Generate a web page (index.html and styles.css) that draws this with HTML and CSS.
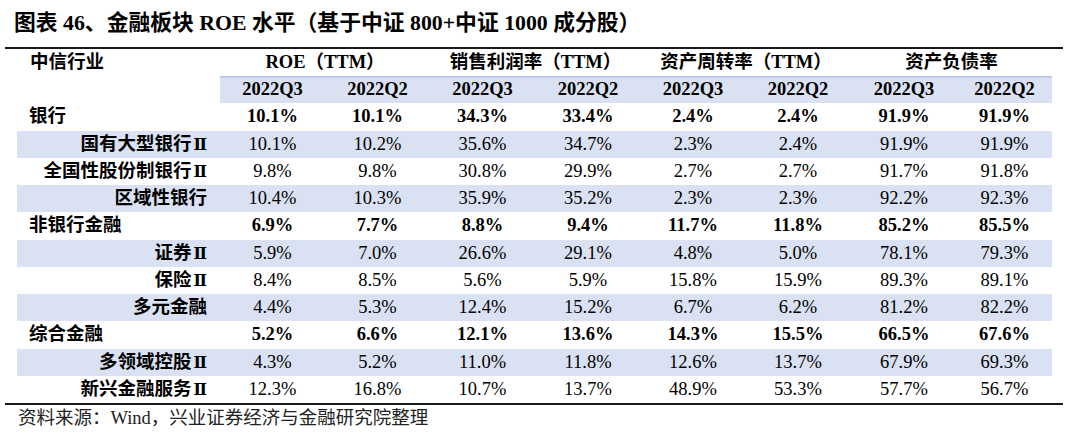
FILE: index.html
```html
<!DOCTYPE html>
<html lang="zh-CN">
<head>
<meta charset="utf-8">
<title>金融板块 ROE 水平</title>
<link rel="stylesheet" href="styles.css">
</head>
<body>
<div class="page">
  <h1 class="title">图表 46、金融板块 ROE 水平（基于中证 800+中证 1000 成分股）</h1>
  <div class="table">
    <div class="row head1">
      <div class="cell label">中信行业</div>
      <div class="cell group span2">ROE（TTM）</div>
      <div class="cell group span2">销售利润率（TTM）</div>
      <div class="cell group span2">资产周转率（TTM）</div>
      <div class="cell group span2">资产负债率</div>
    </div>
    <div class="row head2">
      <div class="cell label"></div>
      <div class="cell q">2022Q3</div>
      <div class="cell q">2022Q2</div>
      <div class="cell q">2022Q3</div>
      <div class="cell q">2022Q2</div>
      <div class="cell q">2022Q3</div>
      <div class="cell q">2022Q2</div>
      <div class="cell q">2022Q3</div>
      <div class="cell q">2022Q2</div>
    </div>

    <div class="row top">
      <div class="cell label">银行</div>
      <div class="cell">10.1%</div><div class="cell">10.1%</div>
      <div class="cell">34.3%</div><div class="cell">33.4%</div>
      <div class="cell">2.4%</div><div class="cell">2.4%</div>
      <div class="cell">91.9%</div><div class="cell">91.9%</div>
    </div>
    <div class="row sub band">
      <div class="cell label">国有大型银行<span class="rn">Ⅱ</span></div>
      <div class="cell">10.1%</div><div class="cell">10.2%</div>
      <div class="cell">35.6%</div><div class="cell">34.7%</div>
      <div class="cell">2.3%</div><div class="cell">2.4%</div>
      <div class="cell">91.9%</div><div class="cell">91.9%</div>
    </div>
    <div class="row sub">
      <div class="cell label">全国性股份制银行<span class="rn">Ⅱ</span></div>
      <div class="cell">9.8%</div><div class="cell">9.8%</div>
      <div class="cell">30.8%</div><div class="cell">29.9%</div>
      <div class="cell">2.7%</div><div class="cell">2.7%</div>
      <div class="cell">91.7%</div><div class="cell">91.8%</div>
    </div>
    <div class="row sub band">
      <div class="cell label">区域性银行</div>
      <div class="cell">10.4%</div><div class="cell">10.3%</div>
      <div class="cell">35.9%</div><div class="cell">35.2%</div>
      <div class="cell">2.3%</div><div class="cell">2.3%</div>
      <div class="cell">92.2%</div><div class="cell">92.3%</div>
    </div>

    <div class="row top">
      <div class="cell label">非银行金融</div>
      <div class="cell">6.9%</div><div class="cell">7.7%</div>
      <div class="cell">8.8%</div><div class="cell">9.4%</div>
      <div class="cell">11.7%</div><div class="cell">11.8%</div>
      <div class="cell">85.2%</div><div class="cell">85.5%</div>
    </div>
    <div class="row sub band">
      <div class="cell label">证券<span class="rn">Ⅱ</span></div>
      <div class="cell">5.9%</div><div class="cell">7.0%</div>
      <div class="cell">26.6%</div><div class="cell">29.1%</div>
      <div class="cell">4.8%</div><div class="cell">5.0%</div>
      <div class="cell">78.1%</div><div class="cell">79.3%</div>
    </div>
    <div class="row sub">
      <div class="cell label">保险<span class="rn">Ⅱ</span></div>
      <div class="cell">8.4%</div><div class="cell">8.5%</div>
      <div class="cell">5.6%</div><div class="cell">5.9%</div>
      <div class="cell">15.8%</div><div class="cell">15.9%</div>
      <div class="cell">89.3%</div><div class="cell">89.1%</div>
    </div>
    <div class="row sub band">
      <div class="cell label">多元金融</div>
      <div class="cell">4.4%</div><div class="cell">5.3%</div>
      <div class="cell">12.4%</div><div class="cell">15.2%</div>
      <div class="cell">6.7%</div><div class="cell">6.2%</div>
      <div class="cell">81.2%</div><div class="cell">82.2%</div>
    </div>

    <div class="row top">
      <div class="cell label">综合金融</div>
      <div class="cell">5.2%</div><div class="cell">6.6%</div>
      <div class="cell">12.1%</div><div class="cell">13.6%</div>
      <div class="cell">14.3%</div><div class="cell">15.5%</div>
      <div class="cell">66.5%</div><div class="cell">67.6%</div>
    </div>
    <div class="row sub band">
      <div class="cell label">多领域控股<span class="rn">Ⅱ</span></div>
      <div class="cell">4.3%</div><div class="cell">5.2%</div>
      <div class="cell">11.0%</div><div class="cell">11.8%</div>
      <div class="cell">12.6%</div><div class="cell">13.7%</div>
      <div class="cell">67.9%</div><div class="cell">69.3%</div>
    </div>
    <div class="row sub">
      <div class="cell label">新兴金融服务<span class="rn">Ⅱ</span></div>
      <div class="cell">12.3%</div><div class="cell">16.8%</div>
      <div class="cell">10.7%</div><div class="cell">13.7%</div>
      <div class="cell">48.9%</div><div class="cell">53.3%</div>
      <div class="cell">57.7%</div><div class="cell">56.7%</div>
    </div>
  </div>
  <p class="source">资料来源：Wind，兴业证券经济与金融研究院整理</p>
</div>
</body>
</html>
```

FILE: styles.css
```css
html, body {
  margin: 0;
  padding: 0;
  background: #ffffff;
}

body {
  font-family: "Liberation Serif", "Noto Sans CJK SC", serif;
  color: #000;
}

.page {
  width: 1080px;
  height: 442px;
  overflow: hidden;
}

.title {
  margin: 0 0 0 14px;
  padding-top: 9px;
  height: 47px;
  box-sizing: border-box;
  font-size: 21.8px;
  line-height: 29px;
  font-weight: 700;
  white-space: nowrap;
}

.table {
  margin-left: 5px;
  width: 1058px;
  box-sizing: border-box;
  padding: 0 11px 0 12px;
  border-top: 2px solid #1a1a1a;
  border-bottom: 2px solid #1a1a1a;
}

.row {
  display: grid;
  grid-template-columns: 203px 105px 105px 105px 106px 104px 106px 106px 95px;
  height: 27.25px;
  font-size: 18.5px;
  line-height: 27.25px;
}

.cell {
  text-align: center;
  white-space: nowrap;
}

.head1 {
  height: 27px;
  line-height: 27px;
  font-weight: 700;
}

.head1 .label {
  padding-left: 13px;
  text-align: left;
}

.group {
  grid-column: span 2;
}

.head2 .q {
  background: #d9e1f2;
  font-weight: 700;
  box-shadow: inset 0 1.5px 0 #b4c6e7;
}

.top {
  font-weight: 700;
}

.top .label {
  padding-left: 12px;
  text-align: left;
}

.sub .label {
  padding-right: 13px;
  text-align: right;
  font-weight: 700;
}

.rn {
  font-family: "DejaVu Serif", "Liberation Serif", serif;
  font-size: 16px;
  font-weight: 700;
  margin-left: 2px;
}

.band {
  background: #d9e1f2;
}

.source {
  margin: 0 0 0 18px;
  font-size: 18.5px;
  line-height: 26px;
  color: #222;
  white-space: nowrap;
}
```
